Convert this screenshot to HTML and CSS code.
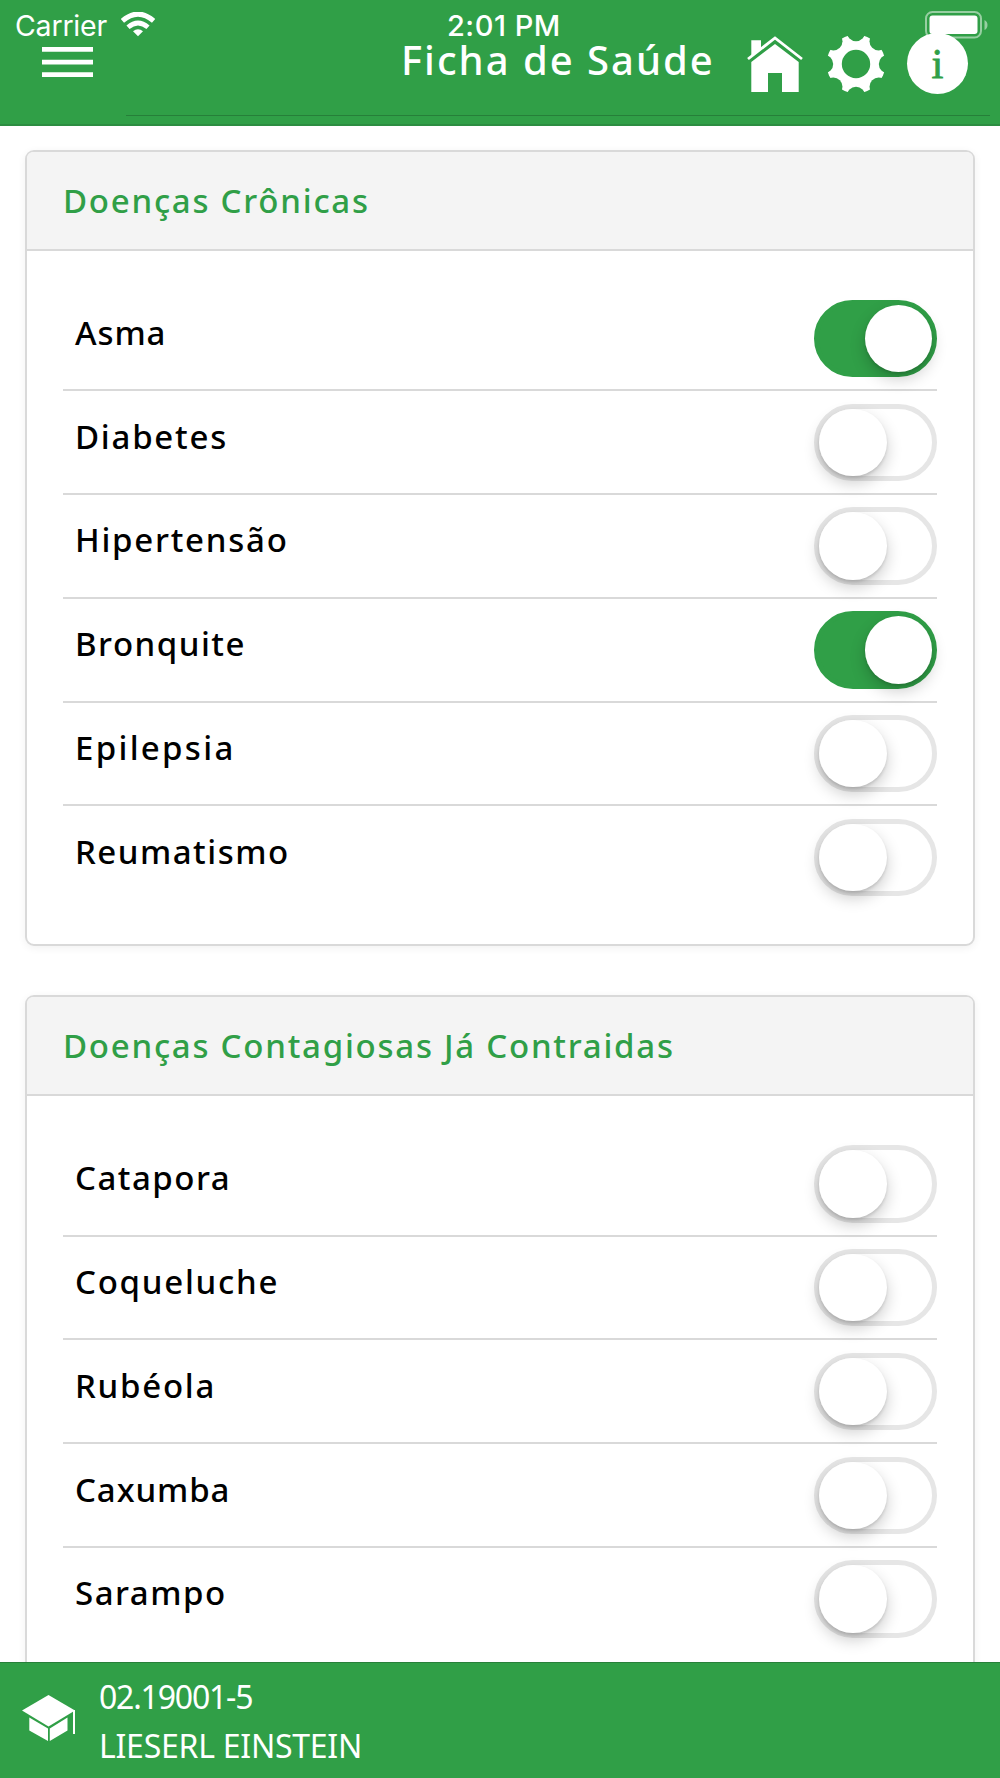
FILE: index.html
```html
<!DOCTYPE html>
<html lang="pt-BR">
<head>
<meta charset="utf-8">
<title>Ficha de Saúde</title>
<link rel="stylesheet" href="styles.css">
</head>
<body>
<div class="app">
  <header class="topbar">
    <div class="status">
      <span class="carrier">Carrier</span>
      <svg class="wifi" width="34" height="25" viewBox="0 0 34 25" fill="none" stroke="#fff"><path d="M1.4 8.9Q17-4.7 32.6 8.9" stroke-width="5"/><path d="M7 15.3Q17 6.7 27 15.3" stroke-width="4.8"/><path d="M12 19.2Q17 15.2 22 19.2L17 24.3Z" fill="#fff" stroke="none"/></svg>
      <span class="clock">2:01 PM</span>
      <svg class="battery" width="63" height="28" viewBox="0 0 63 28"><rect x="1" y="1" width="55" height="25.5" rx="6.5" fill="none" stroke="#97cfa2" stroke-width="2"/><rect x="4.5" y="4.5" width="48" height="18.5" rx="3" fill="#fff"/><path d="M59.5 9Q62.5 10.5 62.5 14Q62.5 17.5 59.5 19Z" fill="#97cfa2"/></svg>
    </div>
    <nav class="nav">
      <svg class="burger" width="51" height="31" viewBox="0 0 51 31" fill="#fff"><path d="M0 0h51v4.8H0zM0 12.7h51v4.8H0zM0 25.3h51v4.8H0z"/></svg>
      <h1 class="title">Ficha de Saúde</h1>
      <svg class="home" width="56" height="57" viewBox="0 0 56 57"><path fill="#fff" d="M28 8L51.7 26V56H35V37H21V56H4.3V26z"/><path d="M1 23L28 2L55 23" fill="none" stroke="#309f47" stroke-width="7"/><path fill="#fff" d="M4.3 4.3H14V13L4.3 20.5z"/><path d="M1 23L28 2L55 23" fill="none" stroke="#fff" stroke-width="2.8"/></svg>
      <svg class="gear" width="58" height="58" viewBox="-29 -29 58 58"><defs><mask id="gear-cuts"><rect x="-30" y="-30" width="60" height="60" fill="#fff"/><g fill="#000"><circle r="14.2"/><circle cy="-32" r="9.2"/><circle cy="32" r="9.2"/><circle cx="-32" r="9.2"/><circle cx="32" r="9.2"/><circle cx="22.7" cy="22.7" r="9.2"/><circle cx="-22.7" cy="22.7" r="9.2"/><circle cx="22.7" cy="-22.7" r="9.2"/><circle cx="-22.7" cy="-22.7" r="9.2"/></g></mask></defs><circle r="29.3" fill="#fff" mask="url(#gear-cuts)"/></svg>
      <span class="info">i</span>
    </nav>
    <div class="rule"></div>
  </header>
  <main class="content">
    <section class="card">
      <h2 class="card-title">Doenças Crônicas</h2>
      <div class="list">
        <div class="row"><span class="tight">Asma</span><i class="toggle on"></i></div>
        <div class="row"><span class="loose">Diabetes</span><i class="toggle"></i></div>
        <div class="row"><span class="loose">Hipertensão</span><i class="toggle"></i></div>
        <div class="row"><span>Bronquite</span><i class="toggle on"></i></div>
        <div class="row"><span class="wide">Epilepsia</span><i class="toggle"></i></div>
        <div class="row"><span>Reumatismo</span><i class="toggle"></i></div>
      </div>
    </section>
    <section class="card">
      <h2 class="card-title">Doenças Contagiosas Já Contraidas</h2>
      <div class="list">
        <div class="row"><span>Catapora</span><i class="toggle"></i></div>
        <div class="row"><span class="loose">Coqueluche</span><i class="toggle"></i></div>
        <div class="row"><span class="loose">Rubéola</span><i class="toggle"></i></div>
        <div class="row"><span class="tight">Caxumba</span><i class="toggle"></i></div>
        <div class="row"><span>Sarampo</span><i class="toggle"></i></div>
      </div>
    </section>
  </main>
  <footer class="footer">
    <svg class="cap" width="54" height="47" viewBox="0 0 54 47" fill="#fff"><path d="M0 15.5L26.5 0L53 15.5L26.5 31.5z"/><path d="M7.3 22.5L26 33.5V46L7.3 35.5zM27.8 33.5L45.5 22.5V35.5L27.8 46z"/><path d="M51 15h2v24h-2z"/></svg>
    <div class="student"><span class="number">02.19001-5</span><span class="name">LIESERL EINSTEIN</span></div>
  </footer>
</div>
</body>
</html>
```
FILE: styles.css
```css
* { box-sizing: border-box; }
body { margin: 0; background: #fff; }
.app {
  width: 1000px;
  height: 1778px;
  display: flex;
  flex-direction: column;
  overflow: hidden;
  font-family: "Noto Sans", sans-serif;
}

.topbar {
  flex: none;
  height: 126px;
  background: #309f47;
  border-bottom: 2px solid #2c8d41;
  color: #fff;
}
.status {
  display: flex;
  height: 47px;
  font: 28.5px/51px Inter, sans-serif;
}
.carrier { width: 105px; padding-left: 15px; letter-spacing: -.2px; }
.wifi { margin: 12px 0 0 16px; }
.clock {
  width: 120px;
  margin-left: 292px;
  font-size: 29px;
  font-weight: 500;
  letter-spacing: .5px;
  white-space: nowrap;
}
.battery { margin: 11px 0 0 358px; }
.nav { display: flex; height: 68px; }
.burger { margin-left: 42px; }
.title {
  width: 315px;
  margin: -8px 0 0 308px;
  font-size: 40px;
  line-height: 41px;
  font-weight: 500;
  letter-spacing: 2px;
  white-space: nowrap;
}
.home { margin: -11px 0 0 31px; }
.gear { margin: -12px 0 0 24px; }
.info {
  width: 61px;
  height: 61px;
  margin: -14px 0 0 22px;
  border-radius: 50%;
  background: #fff;
  color: #309f47;
  font: 43px/61px "Liberation Serif", serif;
  text-align: center;
  -webkit-text-stroke: .8px #309f47;
}
.rule { width: 864px; height: 1px; margin-left: 126px; background: #267f39; }

.content { flex: 1; min-height: 0; overflow: hidden; padding: 24px 25px 0; }
.card {
  height: 796.4px;
  margin-bottom: 49px;
  border: 2px solid #d9d9d9;
  border-radius: 9px;
  box-shadow: 0 2px 8px rgba(0, 0, 0, .06);
}
.card-title {
  height: 99px;
  margin: 0;
  padding-left: 36px;
  background: #f4f4f4;
  border-bottom: 2px solid #d9d9d9;
  border-radius: 6px 6px 0 0;
  color: #309f47;
  font-size: 33px;
  line-height: 97px;
  font-weight: 500;
  letter-spacing: 1.75px;
  white-space: nowrap;
}
.list { padding: 36.5px 36px 0; }
.row {
  display: flex;
  justify-content: space-between;
  height: 103.8px;
  padding: 12.3px 0 0 12px;
  border-bottom: 2px solid #d9d9d9;
  font-size: 33px;
  line-height: 65.5px;
  font-weight: 500;
  letter-spacing: 1.5px;
}
.row:last-child { border-bottom: 0; }
.tight { letter-spacing: .9px; }
.loose { letter-spacing: 1.75px; }
.wide { letter-spacing: 2.3px; }
.toggle {
  flex: none;
  width: 123px;
  height: 77.5px;
  border: 5px solid #e6e6e6;
  border-radius: 39px;
}
.toggle::before {
  content: "";
  display: block;
  width: 67.5px;
  height: 67.5px;
  border-radius: 50%;
  background: #fff;
  box-shadow: 0 7px 16px rgba(0, 0, 0, .2), 0 2px 3px rgba(0, 0, 0, .12);
}
.toggle.on { background: #309f47; border-color: #309f47; }
.toggle.on::before { margin-left: auto; }

.footer {
  flex: none;
  height: 116px;
  display: flex;
  background: #309f47;
  border-top: 1px solid #27803a;
  color: #fff;
}
.cap { margin: 32px 0 0 22px; }
.student {
  display: flex;
  flex-direction: column;
  margin: 9px 0 0 23px;
  font-size: 32px;
  line-height: 49px;
}
.student span { white-space: nowrap; }
.number { letter-spacing: -1.2px; }
.name { letter-spacing: -.25px; }
```
